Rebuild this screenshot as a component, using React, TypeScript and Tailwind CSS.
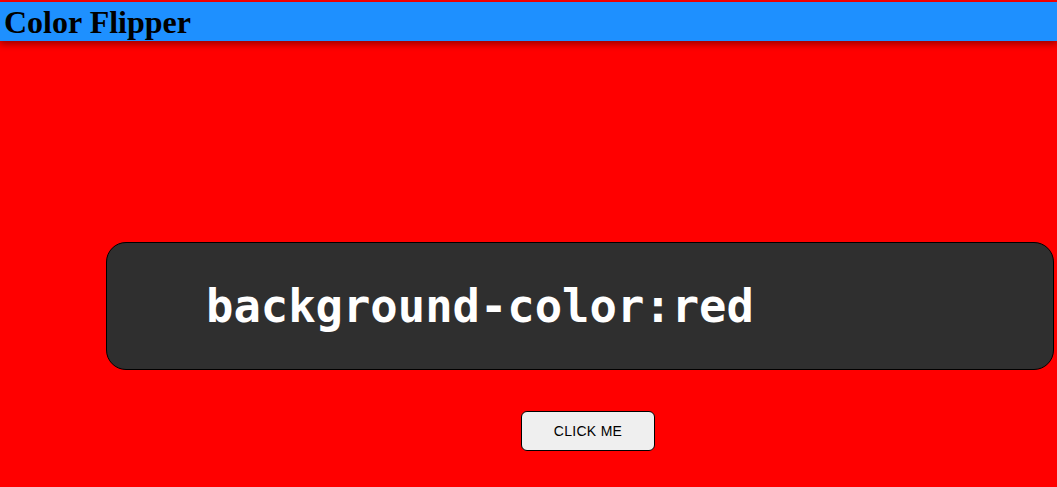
export default function App() {
  return (
    <div className="min-h-[487px] w-full bg-[#ff0000] pt-[2px]">
      <header className="h-[39px] bg-[#1e90ff] pl-[4px] shadow-[0_3px_7px_rgba(0,0,0,0.4)] relative">
        <h1 className="text-[32px] font-bold leading-[40px] text-black" style={{ fontFamily: '"Liberation Serif", "Times New Roman", serif' }}>
          Color Flipper
        </h1>
      </header>
      <div className="pt-[201px]">
        <div className="ml-[106px] flex h-[128px] w-[948px] items-center rounded-[20px] border border-black bg-[#2f2f2f] pl-[99px] pt-[2px]">
          <span className="text-[45.5px] font-bold leading-none text-white" style={{ fontFamily: '"DejaVu Sans Mono", Consolas, monospace' }}>
            background-color:red
          </span>
        </div>
        <button className="ml-[521px] mt-[41px] flex h-[40px] w-[134px] items-center justify-center rounded-[6px] border border-black bg-[#efefef] text-[14px] tracking-[0.3px] text-black" style={{ fontFamily: '"Liberation Sans", Arial, sans-serif' }}>
          CLICK ME
        </button>
      </div>
    </div>
  );
}
